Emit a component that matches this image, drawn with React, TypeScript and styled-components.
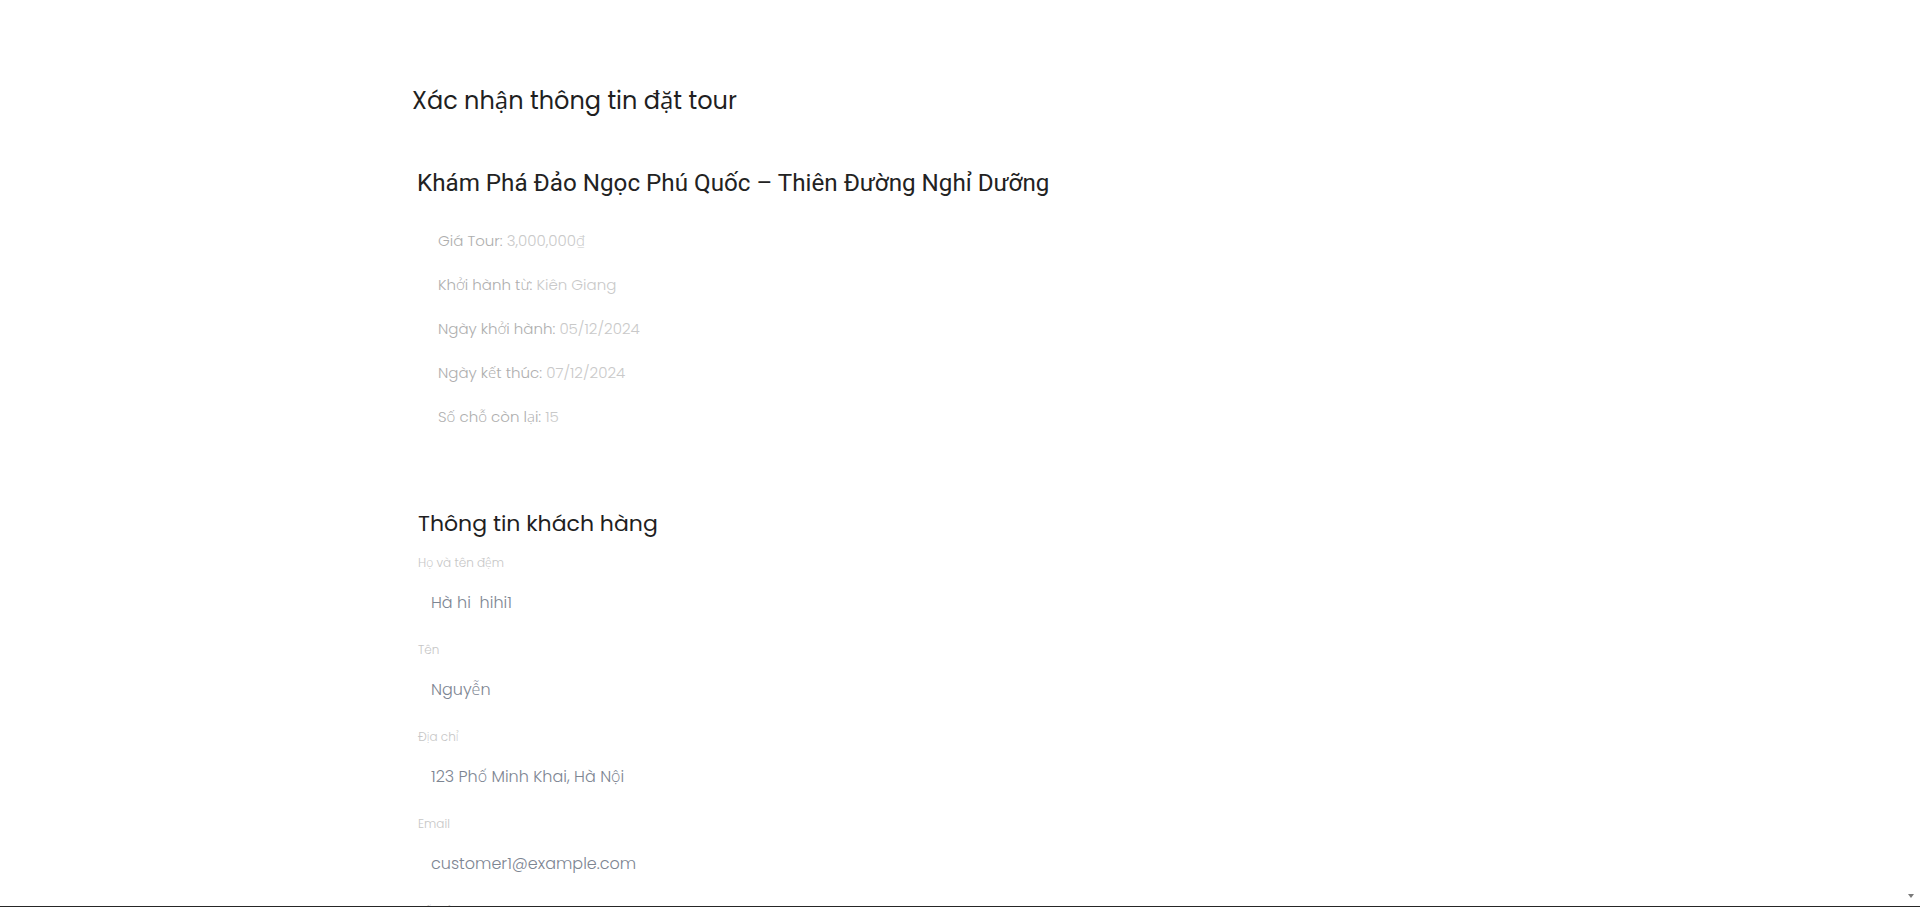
import * as React from 'react';
import styled, { createGlobalStyle } from 'styled-components';

const GlobalStyle = createGlobalStyle`
  html, body {
    margin: 0;
    padding: 0;
    overflow: hidden;
    background: #fff;
  }
  body {
    font-family: Poppins, 'Open Sans', 'Noto Sans', sans-serif;
    color: #212529;
  }
  * {
    box-sizing: border-box;
  }
`;

const Page = styled.div`
  padding-top: 86px;
  padding-bottom: 60px;
`;

const Container = styled.div`
  width: 1096px;
  margin: 0 auto;
`;

const Title = styled.h4`
  margin: 0;
  font-size: 24px;
  line-height: 30px;
  font-weight: 400;
  color: #1f1f1f;
`;

const TourCard = styled.div`
  margin-top: 52px;
  padding-left: 5px;
`;

const TourName = styled.h5`
  margin: 0;
  font-family: Roboto, 'Liberation Sans', sans-serif;
  font-size: 24.2px;
  line-height: 30px;
  font-weight: 400;
  color: #222;
`;

const DetailList = styled.ul`
  list-style: none;
  margin: 33px 0 0;
  padding: 0 0 0 21px;
`;

const DetailItem = styled.li`
  font-size: 15px;
  line-height: 20px;
  font-weight: 300;
  color: #aeaeae;
  & + & {
    margin-top: 24px;
  }
`;

const DetailValue = styled.span`
  color: #c9c9c9;
`;

const Section = styled.section`
  margin-top: 83px;
  padding-left: 6px;
`;

const SectionTitle = styled.h5`
  margin: 0 0 16px;
  font-size: 22px;
  line-height: 28px;
  font-weight: 400;
  color: #1f1f1f;
`;

const Field = styled.div`
  display: flex;
  flex-direction: column;
  & + & {
    margin-top: 19px;
  }
`;

const Label = styled.label`
  font-size: 12px;
  line-height: 18px;
  font-weight: 300;
  color: #c6c6c6;
  margin-bottom: 10px;
`;

const Input = styled.input`
  border: none;
  outline: none;
  background: #fff;
  padding: 10px 13px;
  font-family: inherit;
  font-size: 16px;
  line-height: 20px;
  height: 40px;
  font-weight: 300;
  color: #7d8592;
  width: 100%;
`;

const BottomBar = styled.div`
  position: fixed;
  left: 0;
  right: 0;
  bottom: 0;
  height: 1px;
  background: #262626;
`;

const ScrollArrow = styled.div`
  position: fixed;
  right: 6px;
  bottom: 9px;
  width: 0;
  height: 0;
  border-left: 3px solid transparent;
  border-right: 3px solid transparent;
  border-top: 4px solid #7a7a7a;
`;

const details: [string, string][] = [
  ['Giá Tour:', '3,000,000₫'],
  ['Khởi hành từ:', 'Kiên Giang'],
  ['Ngày khởi hành:', '05/12/2024'],
  ['Ngày kết thúc:', '07/12/2024'],
  ['Số chỗ còn lại:', '15'],
];

const fields: [string, string][] = [
  ['Họ và tên đệm', 'Hà hi  hihi1'],
  ['Tên', 'Nguyễn'],
  ['Địa chỉ', '123 Phố Minh Khai, Hà Nội'],
  ['Email', 'customer1@example.com'],
  ['Số điện thoại', '0987654321'],
  ['Số lượng người', '1'],
];

export default function App() {
  return (
    <Page>
      <GlobalStyle />
      <Container>
        <Title>Xác nhận thông tin đặt tour</Title>
        <TourCard>
          <TourName>Khám Phá Đảo Ngọc Phú Quốc – Thiên Đường Nghỉ Dưỡng</TourName>
          <DetailList>
            {details.map(([label, value]) => (
              <DetailItem key={label}>
                {label} <DetailValue>{value}</DetailValue>
              </DetailItem>
            ))}
          </DetailList>
        </TourCard>
        <Section>
          <SectionTitle>Thông tin khách hàng</SectionTitle>
          {fields.map(([label, value]) => (
            <Field key={label}>
              <Label>{label}</Label>
              <Input readOnly value={value} />
            </Field>
          ))}
        </Section>
      </Container>
      <BottomBar />
      <ScrollArrow />
    </Page>
  );
}
